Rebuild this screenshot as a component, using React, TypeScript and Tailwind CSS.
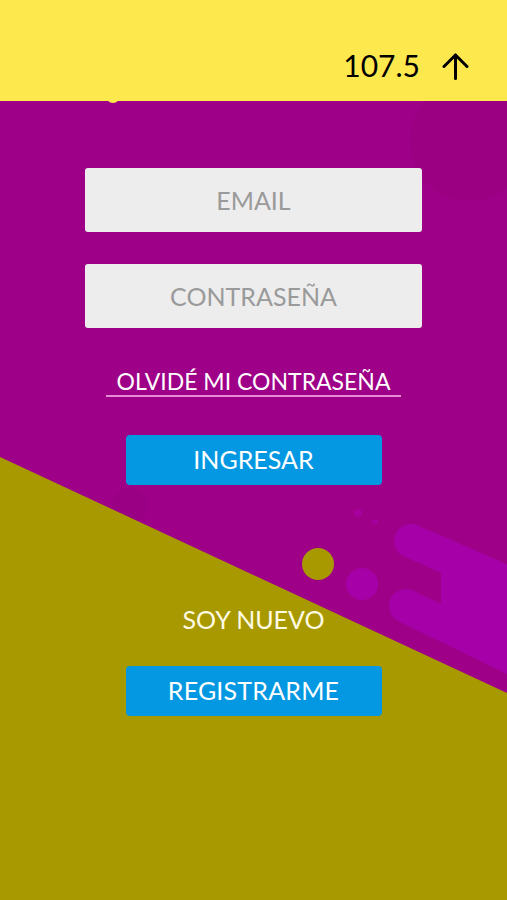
import React from 'react';

function Background() {
    // diagonal split + decorative blobs behind the form
    return (
        <svg className="absolute inset-0 h-full w-full pointer-events-none" viewBox="0 0 507 799" preserveAspectRatio="none">
            <rect x="0" y="0" width="507" height="799" fill="#9e0087" />
            <circle cx="470" cy="40" r="60" fill="#98007f" opacity="0.5" />
            <circle cx="130" cy="405" r="18" fill="#93007f" opacity="0.4" />
            <circle cx="358" cy="412" r="4" fill="#a6009e" />
            <circle cx="375" cy="421" r="3" fill="#a6009e" />
            <g fill="#a600a9" stroke="#a600a9" strokeLinecap="round">
                <line x1="411" y1="440" x2="560" y2="505" strokeWidth="34" />
                <line x1="406" y1="505" x2="560" y2="580" strokeWidth="34" />
                <line x1="458" y1="470" x2="458" y2="505" strokeWidth="34" />
                <polygon points="458,455 560,500 560,580 458,522" strokeWidth="0" />
            </g>
            <circle cx="362" cy="483" r="16" fill="#a600a9" />
            <polygon points="0,356 507,592 507,799 0,799" fill="#a89900" />
            <circle cx="318" cy="463" r="16" fill="#a89900" />
            <circle cx="113" cy="-5" r="7" fill="#fde84e" />
        </svg>
    );
}

export default function App() {
    return (
        <div className="h-[900px] w-full flex flex-col overflow-hidden bg-[#a89900]" style={{ fontFamily: 'Lato, "Open Sans", sans-serif' }}>
            {/* Header */}
            <header className="h-[101px] shrink-0 bg-[#fde84e] flex items-start justify-end pr-[38px] pt-[50px]">
                <span className="text-[30px] leading-none text-black">107.5</span>
                <svg className="ml-[22px] mt-[3px]" width="27" height="27" viewBox="0 0 27 27" fill="none" stroke="#000" strokeWidth="3" strokeLinecap="round" strokeLinejoin="round">
                    <path d="M13.5 25.5V2" />
                    <path d="M2 13.5 13.5 2 25 13.5" />
                </svg>
            </header>

            {/* Main */}
            <main className="relative flex-1">
                <Background />
                <div className="relative flex flex-col items-center pt-[67px]">
                    <input
                        type="email"
                        placeholder="EMAIL"
                        className="h-[64px] w-[337px] rounded-[3px] bg-[#ededed] text-center text-[25px] text-gray-700 placeholder:text-[#9a9a9a] outline-none"
                    />
                    <input
                        type="password"
                        placeholder="CONTRASEÑA"
                        className="mt-[32px] h-[64px] w-[337px] rounded-[3px] bg-[#ededed] text-center text-[25px] text-gray-700 placeholder:text-[#9a9a9a] outline-none"
                    />

                    <a href="#" className="mt-[40px] px-[10px] pb-[1px] border-b-2 border-[#e68bd6] text-[23px] leading-[26px] text-white">
                        OLVIDÉ MI CONTRASEÑA
                    </a>

                    <button className="mt-[38px] h-[50px] w-[256px] rounded-[4px] bg-[#0498e2] text-[25px] text-white">
                        INGRESAR
                    </button>

                    <p className="mt-[119px] text-[25px] leading-[30px] text-[#fffbe4]">SOY NUEVO</p>

                    <button className="mt-[32px] h-[50px] w-[256px] rounded-[4px] bg-[#0498e2] text-[25px] tracking-[0.2px] text-white">
                        REGISTRARME
                    </button>
                </div>
            </main>
        </div>
    );
}
